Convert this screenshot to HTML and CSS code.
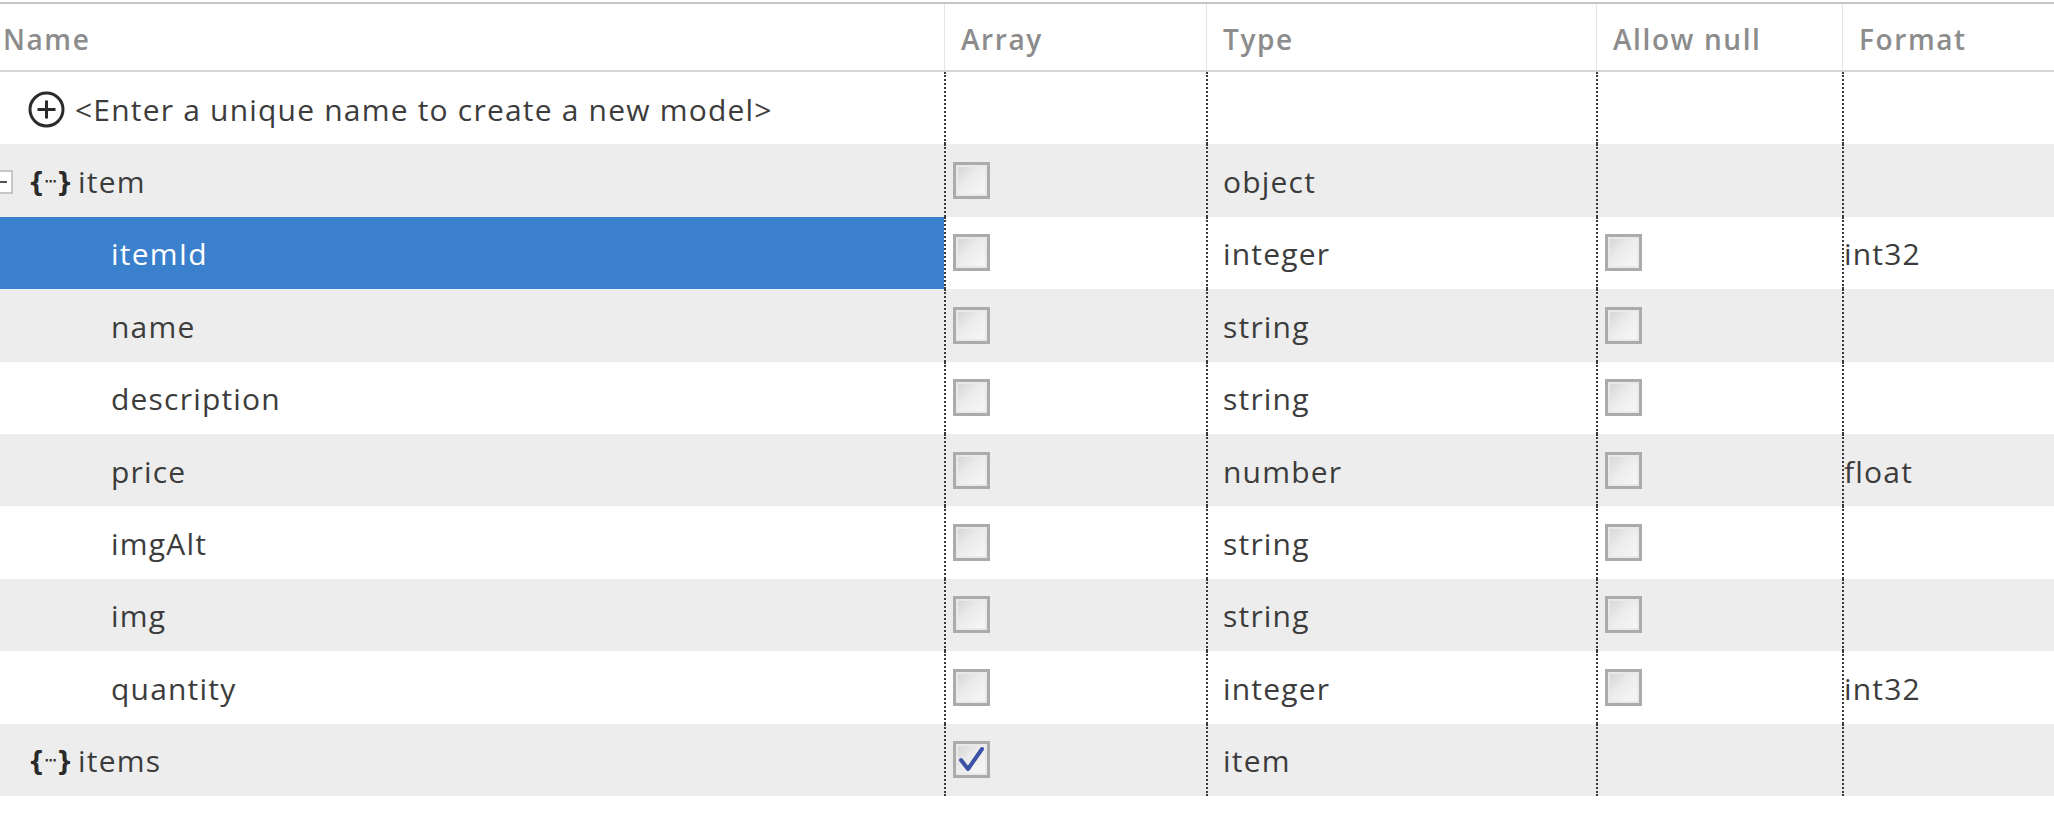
FILE: index.html
```html
<!DOCTYPE html>
<html>
<head>
<meta charset="utf-8">
<link rel="stylesheet" href="styles.css">
</head>
<body>
<div class="table">
  <div class="row head">
    <div class="cell name-h">Name</div>
    <div class="cell">Array</div>
    <div class="cell">Type</div>
    <div class="cell">Allow null</div>
    <div class="cell">Format</div>
  </div>

  <div class="row">
    <div class="cell name lvl0">
      <svg class="plus" width="37" height="37" viewBox="0 0 37 37"><circle cx="18.5" cy="18.5" r="16.5" fill="none" stroke="#2b2b2b" stroke-width="3"/><path d="M18.5 9.5v18M9.5 18.5h18" stroke="#2b2b2b" stroke-width="3"/></svg>
      <span class="txt">&lt;Enter a unique name to create a new model&gt;</span>
    </div>
    <div class="cell"></div>
    <div class="cell"></div>
    <div class="cell"></div>
    <div class="cell fmt"></div>
  </div>

  <div class="row alt">
    <div class="cell name lvl0">
      <svg class="expander" width="13" height="24" viewBox="0 0 13 24"><rect x="-10" y="1" width="22" height="22" fill="#fff" stroke="#b8b8b8" stroke-width="1.5"/><path d="M0 12h7" stroke="#555" stroke-width="2"/></svg>
      <span class="obj">{<span class="dots">⋯</span>}</span>
      <span class="txt">item</span>
    </div>
    <div class="cell cb"><span class="box"></span></div>
    <div class="cell">object</div>
    <div class="cell"></div>
    <div class="cell fmt"></div>
  </div>

  <div class="row">
    <div class="cell name lvl1 sel">itemId</div>
    <div class="cell cb"><span class="box"></span></div>
    <div class="cell">integer</div>
    <div class="cell cb"><span class="box"></span></div>
    <div class="cell fmt">int32</div>
  </div>

  <div class="row alt">
    <div class="cell name lvl1">name</div>
    <div class="cell cb"><span class="box"></span></div>
    <div class="cell">string</div>
    <div class="cell cb"><span class="box"></span></div>
    <div class="cell fmt"></div>
  </div>

  <div class="row">
    <div class="cell name lvl1">description</div>
    <div class="cell cb"><span class="box"></span></div>
    <div class="cell">string</div>
    <div class="cell cb"><span class="box"></span></div>
    <div class="cell fmt"></div>
  </div>

  <div class="row alt">
    <div class="cell name lvl1">price</div>
    <div class="cell cb"><span class="box"></span></div>
    <div class="cell">number</div>
    <div class="cell cb"><span class="box"></span></div>
    <div class="cell fmt">float</div>
  </div>

  <div class="row">
    <div class="cell name lvl1">imgAlt</div>
    <div class="cell cb"><span class="box"></span></div>
    <div class="cell">string</div>
    <div class="cell cb"><span class="box"></span></div>
    <div class="cell fmt"></div>
  </div>

  <div class="row alt">
    <div class="cell name lvl1">img</div>
    <div class="cell cb"><span class="box"></span></div>
    <div class="cell">string</div>
    <div class="cell cb"><span class="box"></span></div>
    <div class="cell fmt"></div>
  </div>

  <div class="row">
    <div class="cell name lvl1">quantity</div>
    <div class="cell cb"><span class="box"></span></div>
    <div class="cell">integer</div>
    <div class="cell cb"><span class="box"></span></div>
    <div class="cell fmt">int32</div>
  </div>

  <div class="row alt">
    <div class="cell name lvl0">
      <span class="obj">{<span class="dots">⋯</span>}</span>
      <span class="txt">items</span>
    </div>
    <div class="cell cb"><span class="box checked"><svg width="31" height="31" viewBox="0 0 31 31"><path d="M5 16 L12 25 L26 5" fill="none" stroke="#3b52a6" stroke-width="4" stroke-linejoin="round" stroke-linecap="round"/></svg></span></div>
    <div class="cell">item</div>
    <div class="cell"></div>
    <div class="cell fmt"></div>
  </div>
</div>
</body>
</html>
```

FILE: styles.css
```css
html, body {
  margin: 0;
  padding: 0;
  background: #ffffff;
}

body {
  font-family: "Open Sans", "DejaVu Sans", sans-serif;
  font-size: 30px;
  color: #3c3c3c;
  letter-spacing: 1.2px;
}

.table {
  width: 2054px;
  padding-top: 2px;
}

.row {
  display: grid;
  grid-template-columns: 944px 262px 390px 246px 1fr;
  height: 72.4px;
  background: #ffffff;
}

.row.alt {
  background: #ededed;
}

.cell {
  display: flex;
  align-items: center;
  padding: 2px 15px 0;
  border-left: 2px dotted #3a3a3a;
  box-sizing: border-box;
  min-width: 0;
  white-space: nowrap;
  overflow: hidden;
}

.cell.name {
  border-left: none;
}

.cell.fmt {
  padding-left: 0;
}

.row.head {
  height: 70px;
  border-top: 2px solid #c6c6c6;
  border-bottom: 2px solid #d6d6d6;
  box-sizing: border-box;
}

.row.head .cell {
  border-left: 1px solid #e4e4e4;
  color: #8c8c8c;
  font-weight: 600;
  font-size: 28px;
  letter-spacing: 1.6px;
  padding-left: 16px;
  padding-top: 3px;
}

.row.head .cell.name-h {
  border-left: none;
  padding-left: 3px;
}

.lvl0 {
  padding-left: 28px;
}

.lvl1 {
  padding-left: 111px;
}

.sel {
  background: #3a80cc;
  color: #ffffff;
}

.plus {
  flex: none;
  margin-right: 10px;
}

.expander {
  flex: none;
  margin-left: -28px;
  margin-right: 15px;
}

.obj {
  flex: none;
  display: inline-flex;
  align-items: center;
  margin-right: 5px;
  font-family: "DejaVu Sans Condensed", "DejaVu Sans", sans-serif;
  font-weight: bold;
  font-size: 26px;
  letter-spacing: 0;
  color: #2a2a2a;
}

.obj .dots {
  font-size: 13px;
  font-weight: bold;
  letter-spacing: 0;
}

.cell.cb {
  padding-left: 7px;
  padding-top: 0;
}

.box {
  display: block;
  width: 37px;
  height: 37px;
  box-sizing: border-box;
  border: 3px solid #ababab;
  box-shadow: inset 0 0 0 2px #e9e9e9;
  background: linear-gradient(135deg, #d3d3d3 0%, #ececec 45%, #f8f8f8 100%);
}

.box.checked svg {
  display: block;
}
```
